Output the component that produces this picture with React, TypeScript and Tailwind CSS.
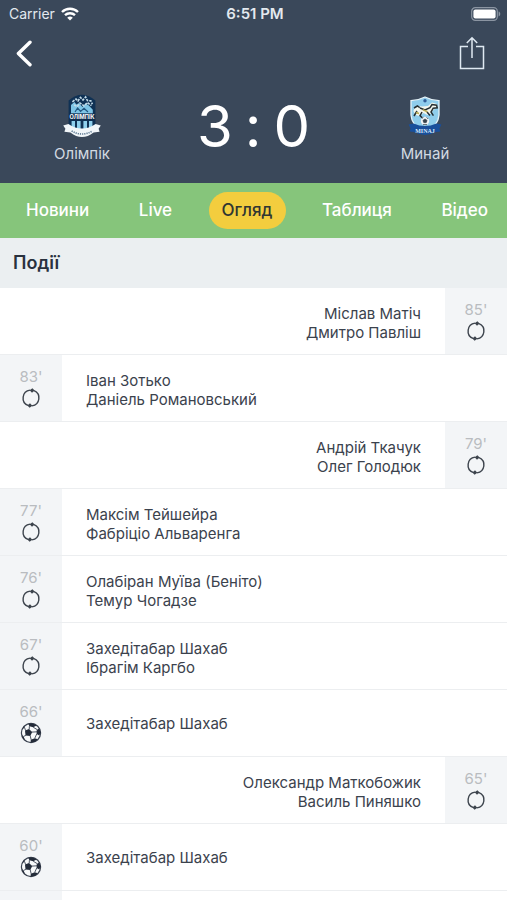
import React from 'react';

type Side = 'home' | 'away';

interface MatchEvent {
  minute: number;
  side: Side;
  kind: 'sub' | 'goal';
  players: string[];
}

const EVENTS: MatchEvent[] = [
  { minute: 85, side: 'away', kind: 'sub', players: ['Міслав Матіч', 'Дмитро Павліш'] },
  { minute: 83, side: 'home', kind: 'sub', players: ['Іван Зотько', 'Даніель Романовський'] },
  { minute: 79, side: 'away', kind: 'sub', players: ['Андрій Ткачук', 'Олег Голодюк'] },
  { minute: 77, side: 'home', kind: 'sub', players: ['Максім Тейшейра', 'Фабріціо Альваренга'] },
  { minute: 76, side: 'home', kind: 'sub', players: ['Олабіран Муїва (Беніто)', 'Темур Чогадзе'] },
  { minute: 67, side: 'home', kind: 'sub', players: ['Захедітабар Шахаб', 'Ібрагім Каргбо'] },
  { minute: 66, side: 'home', kind: 'goal', players: ['Захедітабар Шахаб'] },
  { minute: 65, side: 'away', kind: 'sub', players: ['Олександр Маткобожик', 'Василь Пиняшко'] },
  { minute: 60, side: 'home', kind: 'goal', players: ['Захедітабар Шахаб'] },
];

const TABS = ['Новини', 'Live', 'Огляд', 'Таблиця', 'Відео'];

const WifiIcon = () => (
  <svg width="18" height="14" viewBox="0 0 18 14" fill="none" stroke="white" strokeWidth="2.4">
    <path d="M1 5a11.4 11.4 0 0 1 16 0" />
    <path d="M4 8.2a7.2 7.2 0 0 1 10 0" />
    <path d="M9 13.6 6.2 10.8a4 4 0 0 1 5.6 0Z" fill="white" stroke="none" />
  </svg>
);

const BatteryIcon = () => (
  <svg width="30" height="14" viewBox="0 0 30 14" fill="none">
    <rect x="0.7" y="0.7" width="25.6" height="12.6" rx="3.6" stroke="#8b95a2" strokeWidth="1.2" />
    <rect x="2.4" y="2.4" width="22.2" height="9.2" rx="2" fill="white" />
    <path d="M27.6 4.6c2.2.6 2.2 4.2 0 4.8Z" fill="#8b95a2" />
  </svg>
);

const BackIcon = () => (
  <svg width="16" height="27" viewBox="0 0 16 27" fill="none" stroke="white" strokeWidth="3.4" strokeLinecap="round" strokeLinejoin="round">
    <path d="M14 2.2 2.4 13.5 14 24.8" />
  </svg>
);

const ShareIcon = () => (
  <svg width="26" height="34" viewBox="0 0 26 34" fill="none" stroke="#dfe9f2" strokeWidth="1.5">
    <path d="M9 10.5H1.5v22h23v-22H17" />
    <path d="M13 22V1.8M7.8 7 13 1.8 18.2 7" />
  </svg>
);

const SubIcon = () => (
  <svg width="20" height="20" viewBox="0 0 20 20" fill="none" stroke="#3d444d" strokeWidth="1.4">
    <path d="M7 17.4A8 8 0 0 1 9 2.1" />
    <path d="M13 2.6A8 8 0 0 1 11 17.9" />
    <path d="M8.6 2.3 11.4.2l2.2 2.2-2.6 2.4ZM11.4 17.7l-2.8 2.1-2.2-2.2L9 15.2Z" fill="#3d444d" stroke="none" />
  </svg>
);

const BallIcon = () => (
  <svg width="22" height="22" viewBox="0 0 22 22" fill="none">
    <circle cx="11" cy="11" r="9.6" fill="#f8fafb" stroke="#3a4250" strokeWidth="1.2" />
    <g fill="#232b39">
      <path d="m5 8.4 4-1.5 3.2 3-1.9 4.1-4.8-.4Z" />
      <path d="m8.2 1.6 5.2-.2 3.2 2.2-3.4 1.6-3.8-1Z" />
      <path d="m16.6 8.6 2.6-2.4 1.5 4-1.4 3.4-2.7-1.6Z" />
      <path d="m10.8 17.8 4-1.6 3 1-3 2.9-4.3.7Z" />
      <path d="m1.8 12.6 1.7 1.8 1.8 4-2.4-2.2Z" />
      <path d="m2.2 7 2-3.4.5 2Z" />
    </g>
    <path d="m9.2 7.3.2-3.1M11.9 10.1l5.1-.3M10.2 13.8l1 4M5.9 13.4l-2.4 1M5.6 8.6 4.5 5.4M13.2 5.2 17.8 8M16.8 11.8l-2 4.4" stroke="#3a4250" strokeWidth="0.9" />
  </svg>
);

const OlimpikCrest = () => (
  <svg width="40" height="46" viewBox="0 0 40 46" fill="none">
    <path d="M6.6 7.6Q20-4 33.4 7.6V32q0 6-13.4 10.6Q6.6 38 6.6 32Z" fill="#0f3154" />
    <path d="M9 20.4V12l3.4-3 2 2.6L17 10l3.4 4 3-3.4 3.2 1.6 4.2 4.6v3.6Z" fill="#7ec5e6" />
    <path d="M10.4 8.8 14 6l2 2 2.4-3.6L21 7l2.6-3 1.8 3.6 3.4.2 1.6 3.4M12 12l3.4 1.4L18 10l4 3 3.4-3.4 4 3" stroke="#c3dbe8" strokeWidth="1.6" strokeDasharray="2.6 1" />
    <path d="m13 19 2.6-4 3 3.4 3.4-3 4 3.6" stroke="#1f5680" strokeWidth="1.2" />
    <path d="M7 20.6h26V27H7Z" fill="#0f2d4e" />
    <text x="20" y="26" textAnchor="middle" fill="white" fontSize="5.6" fontWeight="700" className="font-['Inter',sans-serif]">ОЛІМПІК</text>
    <path d="M9.6 28H13v8H9.6ZM15 28h3.6v9H15ZM21.4 28H25v9h-3.6ZM27 28h3.4v8H27Z" fill="#8fd0ed" />
    <path d="M1.2 32.6 6.4 31q13.6 9 27.2 0l5.2 1.6-2.2 3.2 1 3-6 .6q-11.6 9-23.2 0l-6-.6 1-3Z" fill="#f1f6f9" />
    <path d="M9.6 38q10.4 6 20.8 0" stroke="#5f7a92" strokeWidth="1.6" strokeDasharray="1.2 1" />
  </svg>
);

const MinaiCrest = () => (
  <svg width="34" height="40" viewBox="0 0 34 40" fill="none">
    <path d="M3 4.6Q10 4.6 17 1q7 3.6 14 3.6V19Q30.4 30 17 36.6 3.6 30 3 19Z" fill="#8fcdec" stroke="#e6f3f9" strokeWidth="1.3" />
    <path d="M5.4 15Q8 8 14 10.6l6-.6 4-3.4 5 1.4.4 3-4 3-3 4-3 1-4-2-4 3-4-1Z" fill="#f4f7ee" />
    <path d="m6 12 3.4-2 2.4 1.6M12 12l5 2 5-2.4 2-3 4.6.6.6 2.6-4 .4-2.2 3.8 2.4 3.6M9 15l-3 5M14 16l-2 3.6 2.4 2.4M19 16l3 3.4" stroke="#252f33" strokeWidth="1.5" />
    <path d="m14.8 13.6 4.6 2.2M8 16.4l3 1" stroke="#b6a74d" strokeWidth="1.6" />
    <circle cx="17" cy="4.8" r="1.7" fill="#315f99" />
    <circle cx="17" cy="25" r="4.2" fill="#f1f4f4" />
    <path d="m17 23 2 1.4-.8 2.2h-2.4l-.8-2.2ZM14 22.4l1.4-1M18.6 21.4l1.6 1.6M15 28.6h4" fill="#35424c" stroke="#35424c" strokeWidth="0.8" />
    <path d="m.6 28.4 5-.8q11.4 5 22.8 0l5 .8-2 4 1 3.2-4.4.4q-11 6-22 0l-4.4-.4 1-3.2Z" fill="#194f9b" />
    <text x="17" y="37" textAnchor="middle" fill="#d8e9fa" fontSize="6" fontWeight="700" className="font-['Liberation_Serif',serif]">MINAJ</text>
  </svg>
);

const Team = ({ name, crest }: { name: string; crest: React.ReactNode }) => (
  <div className="flex w-[164px] flex-col items-center">
    <div className="flex h-12 items-center">{crest}</div>
    <span className="mt-1 text-[15px] leading-5 text-[#d3dae2]">{name}</span>
  </div>
);

const EventRow = ({ event }: { event: MatchEvent }) => {
  const away = event.side === 'away';
  const pair = event.players.length > 1;
  return (
    <li className={`flex min-h-[67px] shrink-0 ${away ? 'flex-row-reverse text-right' : ''}`}>
      <div className="flex w-[62px] shrink-0 flex-col items-center border-b border-[#eceef0] bg-[#f3f5f7] pt-3">
        <span className="text-[15px] leading-5 text-[#b9bcc0]">{event.minute}'</span>
        <div className="flex h-[22px] items-center">{event.kind === 'goal' ? <BallIcon /> : <SubIcon />}</div>
      </div>
      <div
        className={`flex flex-1 flex-col justify-center border-b border-[#eceef0] px-6 text-[15px] leading-[19px] text-[#3b424d] ${pair ? 'pt-[3px]' : ''}`}
      >
        {event.players.map((player) => (
          <span key={player}>{player}</span>
        ))}
      </div>
    </li>
  );
};

export default function App() {
  return (
    <div className="flex h-screen flex-col overflow-hidden bg-white font-['Inter',sans-serif]">
      <header className="shrink-0 bg-[#3a485a] pb-[19px]">
        <div className="grid h-7 grid-cols-3 items-center pr-1.5 pl-[9px] text-[#e3e9ef]">
          <div className="flex items-center gap-1.5 text-sm">
            Carrier
            <WifiIcon />
          </div>
          <div className="text-center text-[15px] font-semibold">6:51 PM</div>
          <div className="flex justify-end">
            <BatteryIcon />
          </div>
        </div>
        <div className="flex h-[50px] items-center justify-between px-4">
          <button aria-label="Назад">
            <BackIcon />
          </button>
          <button className="mr-1.5" aria-label="Поділитися">
            <ShareIcon />
          </button>
        </div>
        <div className="mt-3.5 flex items-start justify-between">
          <Team name="Олімпік" crest={<OlimpikCrest />} />
          <div className="flex items-center gap-3 text-[58px] leading-[68px] text-white">
            <span>3</span>
            <span>:</span>
            <span>0</span>
          </div>
          <Team name="Минай" crest={<MinaiCrest />} />
        </div>
      </header>

      <nav className="flex h-[55px] shrink-0 items-center justify-between bg-[#86c57b] pr-1.5 pl-[13px]">
        {TABS.map((tab) => (
          <button
            key={tab}
            className={`h-[37px] rounded-full px-[13px] text-[17px] font-medium ${tab === 'Огляд' ? 'bg-[#f3cd3e] text-[#303632]' : 'text-white'}`}
          >
            {tab}
          </button>
        ))}
      </nav>

      <h2 className="flex h-[50px] shrink-0 items-center bg-[#ebeff1] px-[13px] text-lg font-semibold text-[#29313e]">Події</h2>

      <ul className="flex flex-1 flex-col overflow-hidden">
        {EVENTS.map((event) => (
          <EventRow key={event.minute} event={event} />
        ))}
        <li className="flex-1">
          <div className="h-full w-[62px] bg-[#f3f5f7]" />
        </li>
      </ul>
    </div>
  );
}
